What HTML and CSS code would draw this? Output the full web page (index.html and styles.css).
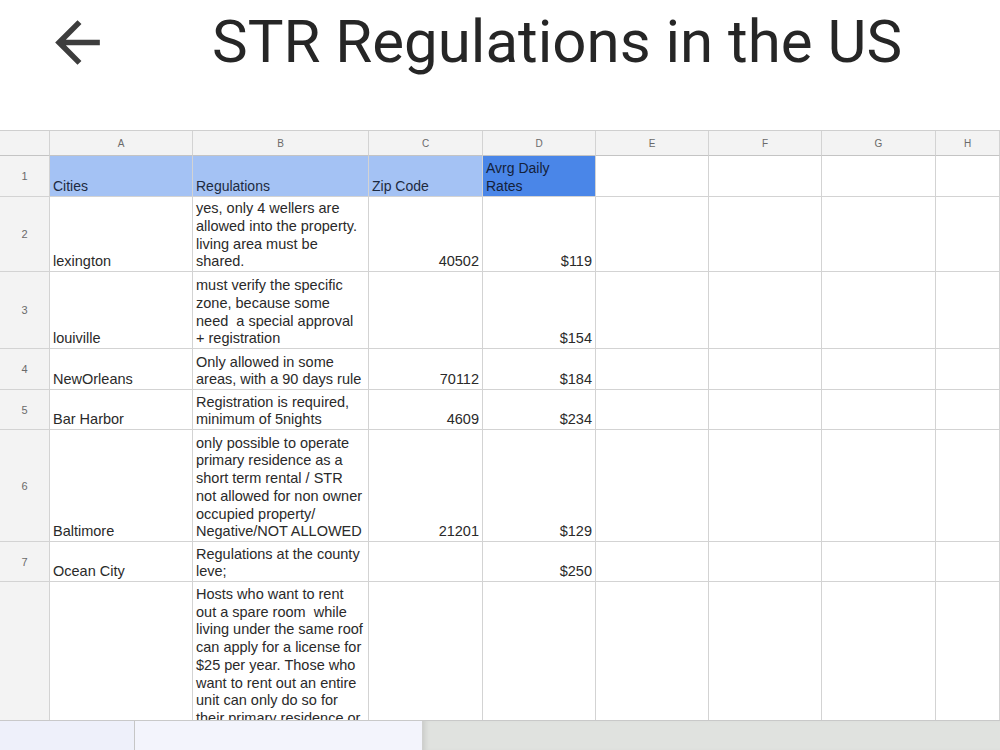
FILE: index.html
```html
<!DOCTYPE html>
<html lang="en">
<head>
    <meta charset="UTF-8">
    <title>STR Regulations in the US</title>
    <link rel="stylesheet" href="styles.css">
</head>
<body>
    <header class="top-bar">
        <svg class="back" viewBox="0 0 24 24" aria-label="Back">
            <path d="M20 11H7.83l5.59-5.59L12 4l-8 8 8 8 1.41-1.41L7.83 13H20v-2z"/>
        </svg>
        <h1 class="title">STR Regulations in the US</h1>
    </header>

    <div class="sheet">
        <div class="grid">
            <!-- column headers -->
            <div class="corner"></div>
            <div class="col-head">A</div>
            <div class="col-head">B</div>
            <div class="col-head">C</div>
            <div class="col-head">D</div>
            <div class="col-head">E</div>
            <div class="col-head">F</div>
            <div class="col-head">G</div>
            <div class="col-head">H</div>

            <!-- row 1 -->
            <div class="row-head">1</div>
            <div class="c hd">Cities</div>
            <div class="c hd">Regulations</div>
            <div class="c hd">Zip Code</div>
            <div class="c hd dark">Avrg Daily<br>Rates</div>
            <div class="c"></div><div class="c"></div><div class="c"></div><div class="c"></div>

            <!-- row 2 -->
            <div class="row-head">2</div>
            <div class="c">lexington</div>
            <div class="c">yes, only 4 wellers are<br>allowed into the property.<br>living area must be<br>shared.</div>
            <div class="c num">40502</div>
            <div class="c num">$119</div>
            <div class="c"></div><div class="c"></div><div class="c"></div><div class="c"></div>

            <!-- row 3 -->
            <div class="row-head">3</div>
            <div class="c">louiville</div>
            <div class="c">must verify the specific<br>zone, because some<br>need&nbsp; a special approval<br>+ registration</div>
            <div class="c num"></div>
            <div class="c num">$154</div>
            <div class="c"></div><div class="c"></div><div class="c"></div><div class="c"></div>

            <!-- row 4 -->
            <div class="row-head">4</div>
            <div class="c">NewOrleans</div>
            <div class="c">Only allowed in some<br>areas, with a 90 days rule</div>
            <div class="c num">70112</div>
            <div class="c num">$184</div>
            <div class="c"></div><div class="c"></div><div class="c"></div><div class="c"></div>

            <!-- row 5 -->
            <div class="row-head">5</div>
            <div class="c">Bar Harbor</div>
            <div class="c">Registration is required,<br>minimum of 5nights</div>
            <div class="c num">4609</div>
            <div class="c num">$234</div>
            <div class="c"></div><div class="c"></div><div class="c"></div><div class="c"></div>

            <!-- row 6 -->
            <div class="row-head">6</div>
            <div class="c">Baltimore</div>
            <div class="c">only possible to operate<br>primary residence as a<br>short term rental / STR<br>not allowed for non owner<br>occupied property/<br>Negative/NOT ALLOWED</div>
            <div class="c num">21201</div>
            <div class="c num">$129</div>
            <div class="c"></div><div class="c"></div><div class="c"></div><div class="c"></div>

            <!-- row 7 -->
            <div class="row-head">7</div>
            <div class="c">Ocean City</div>
            <div class="c">Regulations at the county<br>leve;</div>
            <div class="c num"></div>
            <div class="c num">$250</div>
            <div class="c"></div><div class="c"></div><div class="c"></div><div class="c"></div>

            <!-- row 8 -->
            <div class="row-head"></div>
            <div class="c top"></div>
            <div class="c top">Hosts who want to rent<br>out a spare room&nbsp; while<br>living under the same roof<br>can apply for a license for<br>$25 per year. Those who<br>want to rent out an entire<br>unit can only do so for<br>their primary residence or</div>
            <div class="c top"></div>
            <div class="c top"></div>
            <div class="c top"></div><div class="c top"></div><div class="c top"></div><div class="c top"></div>
        </div>
    </div>

    <footer class="tabs">
        <div class="tab-add"></div>
        <div class="tab"></div>
        <div class="tab-rest"></div>
    </footer>
</body>
</html>
```

FILE: styles.css
```css
body {
    margin: 0;
    background: #ffffff;
    font-family: "Liberation Sans", Arial, sans-serif;
    height: 750px;
    overflow: hidden;
}

.top-bar {
    display: flex;
    align-items: center;
    height: 130px;
    padding-bottom: 46px;
    box-sizing: border-box;
}

.back {
    width: 67px;
    height: 67px;
    margin-left: 44px;
    fill: #3d3d3d;
    flex-shrink: 0;
}

.title {
    margin: 0 0 0 101px;
    font-family: Roboto, "Noto Sans", sans-serif;
    font-weight: 400;
    font-size: 60px;
    line-height: 72px;
    color: #262626;
    white-space: nowrap;
}

.sheet {
    height: 590px;
    overflow: hidden;
    border-top: 1px solid #cfcfcf;
    box-sizing: border-box;
}

.grid {
    display: grid;
    grid-template-columns: 50px 143px 176px 114px 113px 113px 113px 114px 64px;
    grid-template-rows: 25px 41px 75px 77px 41px 40px 112px 40px 160px;
}

.grid > div {
    box-sizing: border-box;
    border-right: 1px solid #d3d3d3;
    border-bottom: 1px solid #d3d3d3;
    overflow: hidden;
}

.corner,
.col-head,
.row-head {
    background: #f3f3f3;
    color: #6a6a6a;
    font-size: 10px;
}

.corner {
    border-bottom-color: #c4c4c4 !important;
}

.col-head {
    display: flex;
    align-items: center;
    justify-content: center;
    border-bottom-color: #c4c4c4 !important;
}

.row-head {
    display: flex;
    align-items: center;
    justify-content: center;
    font-size: 11px;
}

.c {
    display: flex;
    flex-direction: column;
    justify-content: flex-end;
    padding: 0 3px 0 3px;
    font-size: 14.5px;
    line-height: 17.7px;
    color: #2a2a2a;
    white-space: nowrap;
}

.c.num {
    align-items: flex-end;
}

.c.top {
    justify-content: flex-start;
    padding-top: 4px;
}

.c.hd {
    background: #a4c2f4;
    color: #1d2a3f;
    font-size: 14px;
}

.c.dark {
    background: #4a86e8;
    color: #14213a;
    display: block;
    padding-top: 4px;
}

.tabs {
    display: flex;
    height: 30px;
    border-top: 1px solid #c9c9c9;
    box-sizing: border-box;
}

.tab-add {
    width: 135px;
    background: #eef0fa;
    border-right: 1px solid #c6c6c6;
    box-sizing: border-box;
}

.tab {
    width: 287px;
    background: #f3f4fc;
}

.tab-rest {
    flex: 1;
    background: #e0e2df;
    border-left: 2px solid #cfd0ce;
    box-shadow: inset 4px 0 4px -2px rgba(0, 0, 0, 0.08);
}
```
